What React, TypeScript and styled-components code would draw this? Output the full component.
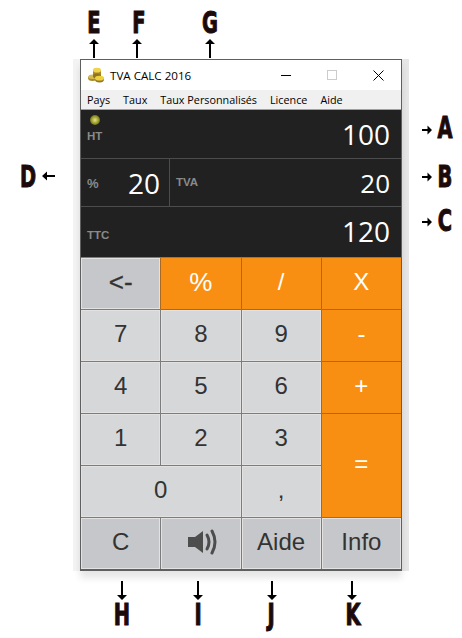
import React from "react";
import styled, { createGlobalStyle } from "styled-components";

const Global = createGlobalStyle`
  html, body { margin: 0; padding: 0; background: #fff; }
  #root { width: 462px; height: 638px; overflow: hidden; }
`;

const Page = styled.div`
  position: relative;
  width: 462px;
  height: 638px;
  padding: 59px 0 0 80px;
  box-sizing: border-box;
  background: #fff;
`;

const Win = styled.div`
  width: 322px;
  height: 512px;
  box-sizing: border-box;
  border: 1px solid #5f5f5f;
  border-bottom-width: 2px;
  background: #fff;
  display: flex;
  flex-direction: column;
  box-shadow: 0 7px 7px rgba(0, 0, 0, 0.1), -7px 0 0 #f3f3f3, 7px 0 0 #e6e6e6;
`;

const TitleBar = styled.div`
  height: 30px;
  flex: none;
  display: flex;
  align-items: center;
  padding-left: 7px;
  font: 11.6px "Open Sans", "Noto Sans", sans-serif;
  color: #000;
  background: #fff;
`;

const Title = styled.span`
  margin-left: 5px;
  flex: 1;
`;

const WinBtn = styled.div`
  width: 46px;
  height: 30px;
  display: flex;
  align-items: center;
  justify-content: center;
`;

const MenuBar = styled.div`
  height: 19px;
  flex: none;
  display: flex;
  align-items: center;
  gap: 13px;
  padding-left: 6px;
  background: #f0f0f0;
  border-bottom: 1px solid #a0a0a0;
  font: 10.8px "Open Sans", "Noto Sans", sans-serif;
  color: #000;
`;

const Display = styled.div`
  background: #212121;
  flex: none;
  display: flex;
  flex-direction: column;
`;

const Row = styled.div<{ $h: number }>`
  position: relative;
  height: ${(p) => p.$h}px;
  display: flex;
  box-sizing: border-box;
  border-bottom: 1px solid #4c4c4c;
  &:last-child { border-bottom: none; }
`;

const Cell = styled.div<{ $w?: number; $sep?: boolean }>`
  ${(p) => (p.$w ? `width: ${p.$w}px; flex: none;` : "flex: 1;")}
  display: flex;
  align-items: center;
  justify-content: space-between;
  box-sizing: border-box;
  padding: 0 11px 0 6px;
  ${(p) => (p.$sep ? "border-right: 1px solid #4c4c4c; padding-right: 9px;" : "")}
`;

const Tag = styled.span<{ $top?: number; $size?: number }>`
  font: bold ${(p) => p.$size ?? 11.5}px "Liberation Sans", Arial, sans-serif;
  color: #8a8a8a;
  margin-top: ${(p) => p.$top ?? 0}px;
`;

const Num = styled.span<{ $size: number; $top?: number }>`
  font: ${(p) => p.$size}px "Open Sans", "Noto Sans", sans-serif;
  color: #fff;
  margin-top: ${(p) => p.$top ?? 0}px;
`;

const Led = styled.div`
  position: absolute;
  left: 9px;
  top: 5px;
  width: 10px;
  height: 10px;
  border-radius: 50%;
  background: radial-gradient(circle, #e2e29a 0, #a3a32c 45%, #5d5d1c 80%, #2a2a1c 100%);
`;

const Keys = styled.div`
  flex: 1;
  display: grid;
  grid-template-columns: repeat(4, 1fr);
  grid-template-rows: repeat(6, 1fr);
  gap: 1px;
  background: #7c7c7c;
  padding-top: 1px;
`;

const Key = styled.div<{ $kind?: "orange" | "dark"; $col?: number; $row?: number }>`
  display: flex;
  align-items: center;
  justify-content: center;
  box-sizing: border-box;
  padding-bottom: 3px;
  font: 24px "Liberation Sans", Arial, sans-serif;
  color: ${(p) => (p.$kind === "orange" ? "#fff" : "#333")};
  background: ${(p) => (p.$kind === "orange" ? "#f98f12" : p.$kind === "dark" ? "#c6c7ca" : "#d6d7d9")};
  border: 1px solid ${(p) => (p.$kind === "orange" ? "#f98f12" : "#e2e2e2")};
  ${(p) => (p.$kind === "orange" ? "box-shadow: 0 1px 0 #a86a20, -1px 0 0 #a86a20;" : "")}
  ${(p) => (p.$col ? `grid-column: span ${p.$col};` : "")}
  ${(p) => (p.$row ? `grid-row: span ${p.$row};` : "")}
`;

const BackKey = styled(Key)`
  font-size: 26px;
  font-weight: 500;
  -webkit-text-stroke: 0.3px #333;
`;

const PercentKey = styled(Key)`
  font-size: 26px;
`;

// les lettres et fleches autour de la fenetre sont des annotations posees sur l'image
const Letter = styled.span<{ $x: number; $y: number }>`
  position: absolute;
  left: ${(p) => p.$x}px;
  top: ${(p) => p.$y}px;
  width: 30px;
  text-align: center;
  font: bold 30px/30px "DejaVu Sans Condensed", "Liberation Sans", sans-serif;
  color: #1c0a0a;
  -webkit-text-stroke: 1px #1c0a0a;
  transform: scaleX(0.72);
`;

const Arrow = styled.svg<{ $x: number; $y: number }>`
  position: absolute;
  left: ${(p) => p.$x}px;
  top: ${(p) => p.$y}px;
`;

const arrowPaths = {
  up: "M6 1 L1 6 H5 V20 H7 V6 H11 Z",
  down: "M6 19 L1 14 H5 V0 H7 V14 H11 Z",
};

const ArrowV = ({ x, y, dir, h = 20 }: { x: number; y: number; dir: "up" | "down"; h?: number }) => (
  <Arrow $x={x} $y={y} width={12} height={h} viewBox={`0 0 12 ${h}`}>
    <path d={arrowPaths[dir]} fill="#000" />
  </Arrow>
);

const ArrowH = ({ x, y, dir }: { x: number; y: number; dir: "left" | "right" }) => (
  <Arrow $x={x} $y={y} width={14} height={12} viewBox="0 0 14 12">
    {dir === "right" ? (
      <path d="M11 6 L6.5 1.5 V5 H1 V7 H6.5 V10.5 Z" fill="#000" />
    ) : (
      <path d="M1 6 L6 1.5 V5 H14 V7 H6 V10.5 Z" fill="#000" />
    )}
  </Arrow>
);

const Coins = () => (
  <svg width="17" height="16" viewBox="0 0 17 16">
    <ellipse cx="4.5" cy="11" rx="4.5" ry="3" fill="#a88b2c" />
    <ellipse cx="4.5" cy="9.8" rx="4" ry="2.2" fill="#d8bc50" />
    <rect x="5" y="3" width="8" height="7" fill="#a88826" />
    <ellipse cx="9" cy="9" rx="4" ry="2.5" fill="#8f7522" />
    <ellipse cx="9" cy="3.2" rx="4" ry="2.4" fill="#f0d44f" />
    <ellipse cx="11.5" cy="12.5" rx="4.5" ry="3" fill="#96791f" />
    <ellipse cx="11.5" cy="11.2" rx="4.5" ry="2.4" fill="#eed13f" />
  </svg>
);

const Speaker = () => (
  <svg width="32" height="30" viewBox="0 0 32 30">
    <path d="M3 10 H10 L18 4 V26 L10 20 H3 Z" fill="#4d4d4d" />
    <path d="M22 8 Q26 15 22 22" stroke="#4d4d4d" strokeWidth="3" fill="none" strokeLinecap="round" />
    <path d="M27 4 Q33 15 27 26" stroke="#4d4d4d" strokeWidth="3" fill="none" strokeLinecap="round" />
  </svg>
);

export default function App() {
  return (
    <Page>
      <Global />
      <Win>
        <TitleBar>
          <Coins />
          <Title>TVA CALC 2016</Title>
          <WinBtn>
            <svg width="11" height="11"><path d="M0 5.5 H10" stroke="#000" /></svg>
          </WinBtn>
          <WinBtn>
            <svg width="11" height="11"><rect x="0.5" y="0.5" width="9" height="9" fill="none" stroke="#ccc" /></svg>
          </WinBtn>
          <WinBtn>
            <svg width="11" height="11"><path d="M0.5 0.5 L10.5 10.5 M10.5 0.5 L0.5 10.5" stroke="#000" /></svg>
          </WinBtn>
        </TitleBar>
        <MenuBar>
          <span>Pays</span>
          <span>Taux</span>
          <span>Taux Personnalisés</span>
          <span>Licence</span>
          <span>Aide</span>
        </MenuBar>
        <Display>
          <Row $h={49}>
            <Led />
            <Cell>
              <Tag $top={3}>HT</Tag>
              <Num $size={28}>100</Num>
            </Cell>
          </Row>
          <Row $h={48}>
            <Cell $w={89} $sep>
              <Tag $size={13} $top={2}>%</Tag>
              <Num $size={28}>20</Num>
            </Cell>
            <Cell>
              <Tag $top={-2}>TVA</Tag>
              <Num $size={26}>20</Num>
            </Cell>
          </Row>
          <Row $h={50}>
            <Cell>
              <Tag $top={6}>TTC</Tag>
              <Num $size={28} $top={-3}>120</Num>
            </Cell>
          </Row>
        </Display>
        <Keys>
          <BackKey $kind="dark">&lt;-</BackKey>
          <PercentKey $kind="orange">%</PercentKey>
          <Key $kind="orange">/</Key>
          <Key $kind="orange">X</Key>
          <Key>7</Key>
          <Key>8</Key>
          <Key>9</Key>
          <Key $kind="orange">-</Key>
          <Key>4</Key>
          <Key>5</Key>
          <Key>6</Key>
          <Key $kind="orange">+</Key>
          <Key>1</Key>
          <Key>2</Key>
          <Key>3</Key>
          <Key $kind="orange" $row={2}>=</Key>
          <Key $col={2}>0</Key>
          <Key>,</Key>
          <Key $kind="dark">C</Key>
          <Key $kind="dark"><Speaker /></Key>
          <Key $kind="dark">Aide</Key>
          <Key $kind="dark">Info</Key>
        </Keys>
      </Win>

      <Letter $x={79} $y={8}>E</Letter>
      <Letter $x={124} $y={8}>F</Letter>
      <Letter $x={195} $y={8}>G</Letter>
      <ArrowV x={88} y={38} dir="up" />
      <ArrowV x={131} y={38} dir="up" />
      <ArrowV x={204} y={38} dir="up" />

      <Letter $x={430} $y={113}>A</Letter>
      <Letter $x={430} $y={162}>B</Letter>
      <Letter $x={430} $y={206}>C</Letter>
      <ArrowH x={421} y={124} dir="right" />
      <ArrowH x={421} y={171} dir="right" />
      <ArrowH x={421} y={216} dir="right" />

      <Letter $x={13} $y={162}>D</Letter>
      <ArrowH x={41} y={170} dir="left" />

      <ArrowV x={116} y={581} dir="down" />
      <ArrowV x={192} y={581} dir="down" />
      <ArrowV x={266} y={581} dir="down" />
      <ArrowV x={346} y={581} dir="down" />
      <Letter $x={107} $y={600}>H</Letter>
      <Letter $x={183} $y={600}>I</Letter>
      <Letter $x={256} $y={600}>J</Letter>
      <Letter $x={338} $y={600}>K</Letter>
    </Page>
  );
}
